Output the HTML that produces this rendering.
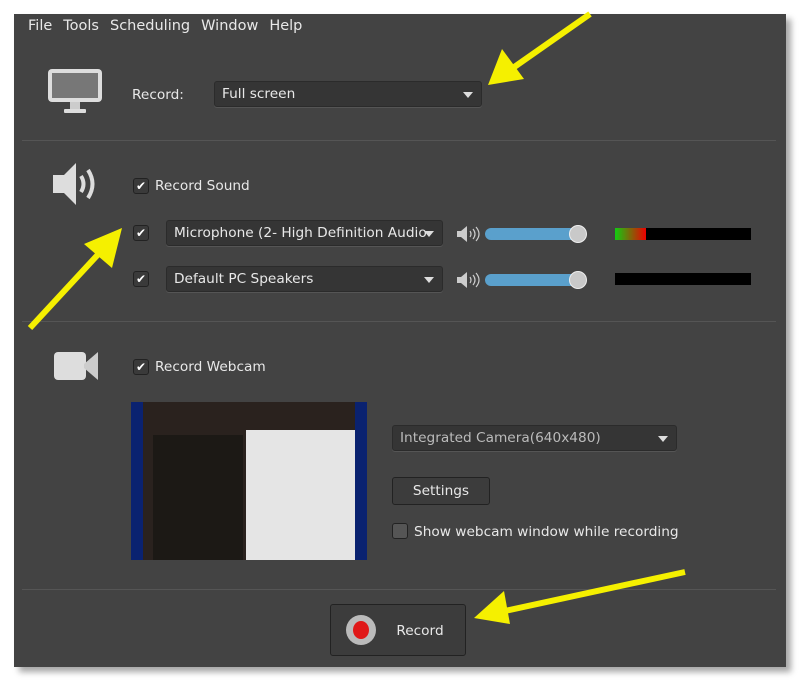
<!DOCTYPE html>
<html><head><style>
*{margin:0;padding:0;box-sizing:border-box}
body{width:800px;height:680px;background:#fff;position:relative;overflow:hidden;font-family:"DejaVu Sans","Liberation Sans",sans-serif;font-size:13.7px;color:#e8e8e8}
.win{position:absolute;left:14px;top:14px;width:772px;height:653px;background:#434343;box-shadow:5px 5px 6px rgba(0,0,0,.35)}
.a{position:absolute}
.menu span{margin-right:11px}
.hr{position:absolute;left:22px;width:754px;height:1px;background:#555}
.dd{position:absolute;background:#353535;border:1px solid #2b2b2b;border-radius:3px;padding-left:7px;padding-right:26px;line-height:24px;white-space:nowrap;overflow:hidden;box-shadow:0 1px 0 #555}
.dd:after{content:"";position:absolute;right:8px;top:10px;border:5px solid transparent;border-top:6px solid #ddd;border-bottom:0}
.cb{position:absolute;width:16px;height:16px;background:#3a3a3a;border:1px solid #222;border-radius:3px;color:#fff;font-size:12px;line-height:14px;text-align:center}
.sl{position:absolute;height:12px;width:94px;background:#5aa0cc;border-radius:6px}
.knob{position:absolute;width:18px;height:18px;border-radius:50%;background:#c9c9c9;border:1px solid #eee}
.meter{position:absolute;width:136px;height:12px;background:#000}
.btn{position:absolute;background:#3c3c3c;border:1px solid #222;border-radius:3px;text-align:center}
</style></head><body>
<div class="win"></div>
<div class="a menu" style="left:28px;top:18px;font-size:14.5px"><span>File</span><span>Tools</span><span>Scheduling</span><span>Window</span><span>Help</span></div>
<svg class="a" style="left:47px;top:68px" width="56" height="48"><rect x="1" y="1" width="54" height="33" rx="4" fill="#ddd"/><rect x="5" y="5" width="46" height="25" fill="#777"/><rect x="23" y="34" width="10" height="8" fill="#ccc"/><rect x="17" y="41" width="22" height="4" rx="1" fill="#ddd"/></svg>
<div class="a" style="left:132px;top:87px">Record:</div>
<div class="dd" style="left:214px;top:81px;width:268px;height:26px">Full screen</div>
<div class="hr" style="top:140px"></div>
<svg class="a" style="left:50px;top:162px" width="54" height="44"><path d="M3 13h11l12-12v42l-12-12H3z" fill="#ddd"/><path d="M31 14q5 8 0 16M38 8q9 14 0 28" stroke="#ddd" stroke-width="4" fill="none"/></svg>
<div class="cb" style="left:133px;top:178px">✔</div>
<div class="a" style="left:155px;top:178px">Record Sound</div>
<div class="cb" style="left:133px;top:225px">✔</div>
<div class="dd" style="left:166px;top:220px;width:277px;height:26px">Microphone (2- High Definition Audio</div>
<div class="cb" style="left:133px;top:271px">✔</div>
<div class="dd" style="left:166px;top:266px;width:277px;height:26px">Default PC Speakers</div>
<svg class="a" style="left:456px;top:225px" width="26" height="18"><path d="M1 6h4l6-5v16l-6-5H1z" fill="#ccc"/><path d="M14 6q2 3 0 6M17 4q4 5 0 10M20 2q6 7 0 14" stroke="#ccc" stroke-width="1.2" fill="none"/></svg>
<svg class="a" style="left:456px;top:271px" width="26" height="18"><path d="M1 6h4l6-5v16l-6-5H1z" fill="#ccc"/><path d="M14 6q2 3 0 6M17 4q4 5 0 10M20 2q6 7 0 14" stroke="#ccc" stroke-width="1.2" fill="none"/></svg>
<div class="sl" style="left:485px;top:228px"></div><div class="knob" style="left:569px;top:225px"></div>
<div class="sl" style="left:485px;top:274px"></div><div class="knob" style="left:569px;top:271px"></div>
<div class="meter" style="left:615px;top:228px"><div style="width:31px;height:12px;background:linear-gradient(90deg,#1c1,#e00)"></div></div>
<div class="meter" style="left:615px;top:273px"></div>
<div class="hr" style="top:321px"></div>
<svg class="a" style="left:53px;top:350px" width="46" height="32"><rect x="1" y="2" width="32" height="28" rx="4" fill="#ddd"/><path d="M31 14l14-12v28l-14-12z" fill="#ccc"/></svg>
<div class="cb" style="left:133px;top:359px">✔</div>
<div class="a" style="left:155px;top:359px">Record Webcam</div>
<div class="a" style="left:131px;top:402px;width:236px;height:158px;background:#0a2270">
<div class="a" style="left:12px;top:0;width:212px;height:158px;background:#2a221e"></div>
<div class="a" style="left:22px;top:33px;width:90px;height:125px;background:#1c1915"></div>
<div class="a" style="left:115px;top:28px;width:109px;height:130px;background:#e5e5e5"></div>
</div>
<div class="dd" style="left:392px;top:425px;width:285px;height:26px;color:#bbb">Integrated Camera(640x480)</div>
<div class="btn" style="left:392px;top:477px;width:98px;height:28px;line-height:26px">Settings</div>
<div class="cb" style="left:392px;top:523px;background:#555">&nbsp;</div>
<div class="a" style="left:414px;top:524px">Show webcam window while recording</div>
<div class="hr" style="top:589px"></div>
<div class="btn" style="left:330px;top:604px;width:136px;height:52px;line-height:52px"><span style="margin-left:44px">Record</span></div>
<svg class="a" style="left:344px;top:614px" width="34" height="32"><ellipse cx="17" cy="16" rx="15" ry="15" fill="#bbb"/><ellipse cx="17" cy="16" rx="8" ry="9" fill="#e01818"/></svg>
<svg class="a" style="left:0;top:0" width="800" height="680">
<g fill="#f5f000" stroke="#f5f000">
<line x1="590" y1="14" x2="510" y2="70" stroke-width="6"/><path d="M488 85l14-36 22 30z" stroke="none"/>
<line x1="30" y1="328" x2="104" y2="248" stroke-width="6"/><path d="M122 228l-10 40-28-24z" stroke="none"/>
<line x1="685" y1="572" x2="500" y2="612" stroke-width="6"/><path d="M474 618l30-27 6 33z" stroke="none"/>
</g></svg>
</body></html>
